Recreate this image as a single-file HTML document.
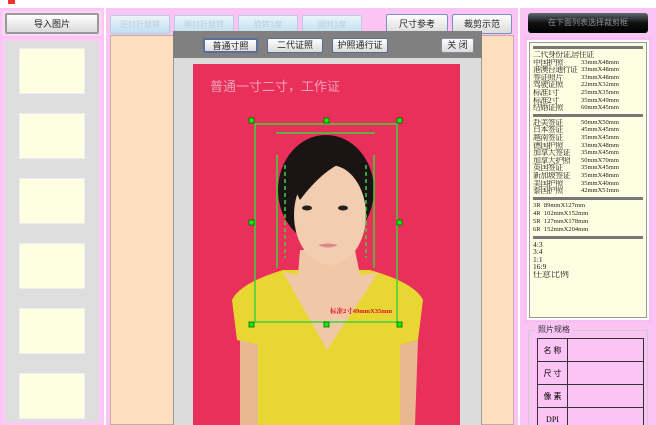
<!DOCTYPE html>
<html style="width:656px;height:425px;overflow:hidden"><head><meta charset="utf-8"><style>
*{margin:0;padding:0;box-sizing:border-box}
body{width:656px;height:425px;overflow:hidden;background:#fbc4f4;font-family:"Liberation Sans","Noto Sans CJK SC",sans-serif;position:relative}
.a{position:absolute}
.btn{position:absolute;border:1px solid #8a8a9a;border-radius:2px;background:linear-gradient(#fdfdfd,#dcdcdc);font-size:9px;text-align:center;color:#222}
.tab{position:absolute;top:15px;height:19px;width:60px;border:1px solid #b5cfe0;background:linear-gradient(#eaf4fa,#c2dff0);color:#b9d0dd;font-size:8px;text-align:center;line-height:17px;border-radius:2px}
.th{position:absolute;left:19px;width:66px;height:46px;background:#fefee3;border:1px solid #eee}
.rt{font-family:"Liberation Serif","Noto Serif CJK SC",serif;font-size:7px;line-height:7.6px;color:#222;white-space:nowrap}
.rt div{display:flex;height:7.6px;overflow:hidden}
.rt b{font-weight:normal;width:48px;display:inline-block;font-size:8px;letter-spacing:-0.6px}
.rt i{font-style:normal;font-size:6.5px}
.sep{height:3px;background:#777;margin:2px 0}
td{border:1px solid #333;font-size:8px;height:23px;padding:0;text-align:center;font-family:"Liberation Serif","Noto Sans CJK SC",serif}
</style></head><body>
<div class="a" style="left:0;top:0;width:656px;height:8px;background:#fff"></div>
<div class="a" style="left:8px;top:0;width:7px;height:4px;background:#e33"></div>
<div class="a" style="left:2px;top:11px;width:100px;height:25px;background:#f9d8f5"></div>
<div class="btn" style="left:5px;top:13px;width:94px;height:21px;line-height:19px;border:2px solid #999">导入图片</div>
<div class="a" style="left:2px;top:38px;width:100px;height:387px;border:3px solid #fcc8f5;background:#dedede"></div>
<div class="th" style="top:48px"></div><div class="th" style="top:113px"></div><div class="th" style="top:178px"></div><div class="th" style="top:243px"></div><div class="th" style="top:308px"></div><div class="th" style="top:373px"></div>
<div class="a" style="left:104px;top:8px;width:2px;height:417px;background:#fff"></div>
<div class="a" style="left:518px;top:8px;width:2px;height:417px;background:#fff"></div>
<div class="tab" style="left:110px">逆时针旋转</div>
<div class="tab" style="left:174px">顺时针旋转</div>
<div class="tab" style="left:238px">旋转1度</div>
<div class="tab" style="left:302px">顺时1度</div>
<div class="btn" style="left:386px;top:14px;width:62px;height:20px;line-height:18px;border-color:#7a90c0">尺寸参考</div>
<div class="btn" style="left:452px;top:14px;width:60px;height:20px;line-height:18px;border-color:#7a90c0">裁剪示范</div>
<div class="a" style="left:110px;top:35px;width:404px;height:390px;background:#fddfc0;border:1px solid #c8a8a8"></div>
<div class="a" style="left:173px;top:31px;width:309px;height:394px;background:#dcdcdc;border-left:1px solid #999;border-right:1px solid #999"></div>
<div class="a" style="left:173px;top:31px;width:309px;height:27px;background:#808080"></div>
<div class="btn" style="left:203px;top:38px;width:55px;height:15px;line-height:13px;border:2px solid #5a6f98">普通寸照</div>
<div class="btn" style="left:267px;top:38px;width:56px;height:15px;line-height:13px;border-color:#5a6f98">二代证照</div>
<div class="btn" style="left:332px;top:38px;width:56px;height:15px;line-height:13px;border-color:#5a6f98">护照通行证</div>
<div class="btn" style="left:441px;top:38px;width:33px;height:15px;line-height:13px">关 闭</div>
<svg class="a" style="left:0;top:0" width="656" height="425">
<rect x="193" y="64" width="267" height="361" fill="#e8305a"/>
<text x="210" y="91" font-size="13" fill="#f4a0b8" font-family="Noto Sans CJK SC,sans-serif">普通一寸二寸，工作证</text>
<path d="M232 300 Q240 283 283 270 L370 270 Q415 283 423 300 L418 340 L400 345 L400 425 L258 425 L258 345 L237 340 Z" fill="#e8d633"/>
<path d="M240 340 L258 345 L258 425 L240 425 Z M400 345 L418 340 L415 425 L400 425 Z" fill="#e8b890"/>
<path d="M300 250 L355 250 L360 275 L378 273 L327 350 L283 272 L298 275 Z" fill="#f0c8a8"/>
<ellipse cx="326" cy="190" rx="48" ry="55" fill="#1a1414"/>
<ellipse cx="330" cy="215" rx="36" ry="50" fill="#f2cdb0"/>
<path d="M290 180 Q310 140 360 158 Q330 160 300 200 Z" fill="#1a1414"/>
<ellipse cx="307" cy="208" rx="5" ry="2.5" fill="#222"/><ellipse cx="343" cy="208" rx="5" ry="2.5" fill="#222"/>
<path d="M318 245 Q328 242 338 245 Q328 250 318 245" fill="#d88"/>
<g stroke="#3cd43c" fill="none" stroke-width="1.5">
<rect x="255" y="124" width="142" height="198"/>
<path d="M276 133 H375 M277 155 V268 M374 155 V268"/>
<path d="M285 165 V258 M366 165 V258" stroke-dasharray="4 3"/>
</g>
<g fill="#1e1" stroke="#060" stroke-width="0.8">
<rect x="249" y="118" width="5" height="5"/><rect x="324" y="118" width="5" height="5"/><rect x="397" y="118" width="5" height="5"/>
<rect x="249" y="220" width="5" height="5"/><rect x="397" y="220" width="5" height="5"/>
<rect x="249" y="322" width="5" height="5"/><rect x="324" y="322" width="5" height="5"/><rect x="397" y="322" width="5" height="5"/>
</g>
<text x="330" y="313" font-size="6.5" fill="#e0102a" font-weight="bold" font-family="Liberation Serif,Noto Serif CJK SC,serif">标准2寸49mmX35mm</text>
</svg>
<div class="a" style="left:528px;top:13px;width:120px;height:20px;background:linear-gradient(#606870,#101010 50%,#000);border-radius:3px;color:#8a8f96;font-size:8px;text-align:center;line-height:20px">在下面列表选择裁剪框</div>
<div class="a" style="left:524px;top:37px;width:128px;height:286px;border:3px solid #f8c0f0;background:#fff;padding:2px 2px">
<div style="background:#fefee3;height:100%;border:1px solid #999;padding:1px 3px;overflow:hidden">
<div class="sep"></div>
<div class="rt">
<div><b style="width:auto">二代身份证,居住证</b></div>
<div><b>中国护照</b><i>33mmX48mm</i></div>
<div><b>港澳台通行证</b><i>33mmX48mm</i></div>
<div><b>签证照片</b><i>33mmX48mm</i></div>
<div><b>驾驶证照</b><i>22mmX32mm</i></div>
<div><b>标准1寸</b><i>25mmX35mm</i></div>
<div><b>标准2寸</b><i>35mmX49mm</i></div>
<div><b>结婚证照</b><i>60mmX45mm</i></div>
</div>
<div class="sep"></div>
<div class="rt">
<div><b>赴美签证</b><i>50mmX50mm</i></div>
<div><b>日本签证</b><i>45mmX45mm</i></div>
<div><b>越南签证</b><i>35mmX45mm</i></div>
<div><b>德国护照</b><i>33mmX48mm</i></div>
<div><b>加拿大签证</b><i>35mmX45mm</i></div>
<div><b>加拿大护照</b><i>50mmX70mm</i></div>
<div><b>英国签证</b><i>35mmX45mm</i></div>
<div><b>新加坡签证</b><i>35mmX48mm</i></div>
<div><b>美国护照</b><i>35mmX40mm</i></div>
<div><b>泰国护照</b><i>42mmX51mm</i></div>
</div>
<div class="sep"></div>
<div class="rt" style="line-height:8px">
<div style="height:8px"><i>3R&nbsp;&nbsp;89mmX127mm</i></div>
<div style="height:8px"><i>4R&nbsp;&nbsp;102mmX152mm</i></div>
<div style="height:8px"><i>5R&nbsp;&nbsp;127mmX178mm</i></div>
<div style="height:8px"><i>6R&nbsp;&nbsp;152mmX204mm</i></div>
</div>
<div class="sep"></div>
<div class="rt" style="line-height:7.6px;font-size:7.5px">
<div>4:3</div><div>3:4</div><div>1:1</div><div>16:9</div><div style="height:9px"><b style="width:auto;font-size:9px;letter-spacing:0">任意比例</b></div>
</div>
</div></div>
<div class="a" style="left:528px;top:330px;width:120px;height:95px;border:1px solid #ccc;border-bottom:none"></div>
<div class="a" style="left:535px;top:324px;background:#fbc4f4;padding:0 3px;font-size:8px;color:#333">照片规格</div>
<div class="a" style="left:537px;top:338px;width:108px;height:87px;overflow:hidden">
<table style="width:107px;border-collapse:collapse;table-layout:fixed">
<tr><td style="width:30px">名 称</td><td></td></tr>
<tr><td>尺 寸</td><td></td></tr>
<tr><td>像 素</td><td></td></tr>
<tr><td>DPI</td><td></td></tr>
<tr><td>大小</td><td></td></tr>
</table></div>
</body></html>
